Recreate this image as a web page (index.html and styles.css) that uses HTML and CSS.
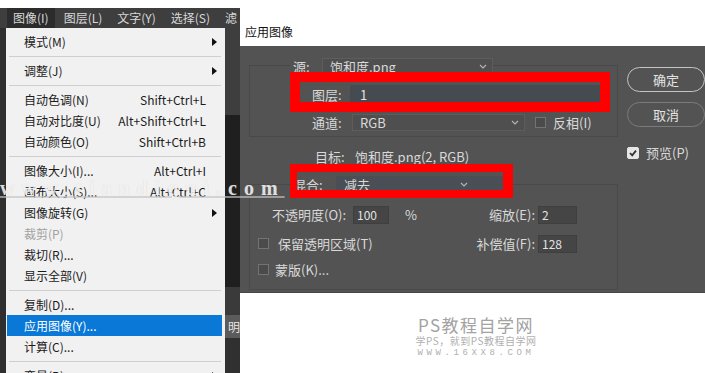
FILE: index.html
```html
<!doctype html>
<html>
   <head>
      <meta charset="utf-8">
      <title>应用图像</title>
      <link rel="stylesheet" href="styles.css">
   </head>
   <body>
      <div class="page">
         <!-- Photoshop image menu -->
         <section class="shot-left">
            <div class="menubar">
               <span class="mb-item active">图像(I)</span>
               <span class="mb-item">图层(L)</span>
               <span class="mb-item">文字(Y)</span>
               <span class="mb-item">选择(S)</span>
               <span class="mb-item">滤</span>
            </div>
            <div class="workspace">
               <div class="edge-left"></div>
               <ul class="menu">
                  <li class="item"><span>模式(M)</span><i class="sub"></i></li>
                  <li class="sep"></li>
                  <li class="item"><span>调整(J)</span><i class="sub"></i></li>
                  <li class="sep"></li>
                  <li class="item"><span>自动色调(N)</span><span class="key">Shift+Ctrl+L</span></li>
                  <li class="item"><span>自动对比度(U)</span><span class="key">Alt+Shift+Ctrl+L</span></li>
                  <li class="item"><span>自动颜色(O)</span><span class="key">Shift+Ctrl+B</span></li>
                  <li class="sep"></li>
                  <li class="item"><span>图像大小(I)...</span><span class="key">Alt+Ctrl+I</span></li>
                  <li class="item"><span>画布大小(S)...</span><span class="key">Alt+Ctrl+C</span></li>
                  <li class="item"><span>图像旋转(G)</span><i class="sub"></i></li>
                  <li class="item disabled"><span>裁剪(P)</span></li>
                  <li class="item"><span>裁切(R)...</span></li>
                  <li class="item"><span>显示全部(V)</span></li>
                  <li class="sep"></li>
                  <li class="item"><span>复制(D)...</span></li>
                  <li class="item active"><span>应用图像(Y)...</span></li>
                  <li class="item"><span>计算(C)...</span></li>
                  <li class="sep"></li>
                  <li class="item"><span>变量(B)</span><i class="sub"></i></li>
               </ul>
               <div class="edge-right">
                  <div class="er er-1"></div>
                  <div class="er er-2"></div>
                  <div class="er er-3"></div>
                  <div class="er er-4">明</div>
                  <div class="er er-5"></div>
               </div>
            </div>
         </section>

         <!-- Apply Image dialog -->
         <section class="dialog">
            <div class="titlebar">应用图像</div>
            <div class="dlg-body">
               <div class="dlg-main">
                  <div class="group group-src">
                     <div class="row row-src">
                        <span class="lbl lbl-src">源:</span>
                        <div class="select sel-src">
                           <span>饱和度.png</span>
                           <svg class="chev" width="8" height="5" viewBox="0 0 8 5"><polyline points="1,1 4,4 7,1" fill="none" stroke="#b4b4b4" stroke-width="1.2"/></svg>
                        </div>
                     </div>
                     <div class="row row-layer">
                        <span class="lbl lbl-layer">图层:</span>
                        <div class="field field-layer">1</div>
                     </div>
                     <div class="row row-chan">
                        <span class="lbl lbl-chan">通道:</span>
                        <div class="select sel-chan">
                           <span>RGB</span>
                           <svg class="chev" width="8" height="5" viewBox="0 0 8 5"><polyline points="1,1 4,4 7,1" fill="none" stroke="#b4b4b4" stroke-width="1.2"/></svg>
                        </div>
                        <span class="check check-inv"></span>
                        <span class="check-text">反相(I)</span>
                     </div>
                  </div>

                  <div class="row row-target">
                     <span class="lbl lbl-target">目标:</span>
                     <span class="value">饱和度.png(2, RGB)</span>
                  </div>

                  <div class="group group-blend">
                     <div class="row row-blend">
                        <span class="lbl lbl-blend">混合:</span>
                        <div class="select sel-blend">
                           <span>减去</span>
                           <svg class="chev" width="8" height="5" viewBox="0 0 8 5"><polyline points="1,1 4,4 7,1" fill="none" stroke="#b4b4b4" stroke-width="1.2"/></svg>
                        </div>
                     </div>
                     <div class="row row-op">
                        <span class="lbl lbl-op">不透明度(O):</span>
                        <div class="field field-num">100</div>
                        <span class="unit">%</span>
                        <div class="pair">
                           <span class="lbl">缩放(E):</span>
                           <div class="field field-num field-wide">2</div>
                        </div>
                     </div>
                     <div class="row row-pres">
                        <span class="check check-left"></span>
                        <span class="check-text pres-text">保留透明区域(T)</span>
                        <div class="pair">
                           <span class="lbl">补偿值(F):</span>
                           <div class="field field-num field-wide">128</div>
                        </div>
                     </div>
                     <div class="row row-mask">
                        <span class="check check-left"></span>
                        <span class="check-text mask-text">蒙版(K)...</span>
                     </div>
                  </div>
               </div>

               <div class="dlg-side">
                  <div class="btn btn-ok">确定</div>
                  <div class="btn btn-cancel">取消</div>
                  <div class="preview">
                     <span class="check checked">
                        <svg width="10" height="10" viewBox="0 0 10 10"><polyline points="2,5 4.2,7.3 8,2.6" fill="none" stroke="#333" stroke-width="1.8"/></svg>
                     </span>
                     <span class="check-text">预览(P)</span>
                  </div>
               </div>

               <div class="redbox redbox-1"></div>
               <div class="redbox redbox-2"></div>
            </div>
            <div class="watermark">
               <div class="wm-title">PS教程自学网</div>
               <div class="wm-sub">学PS，就到PS教程自学网</div>
               <div class="wm-url">WWW.16XX8.COM</div>
            </div>
         </section>

         <div class="site-mark">www.tiandiqui.com</div>
      </div>
   </body>
</html>
```

FILE: styles.css
```css
/* General Reset */
* {
   margin: 0;
   padding: 0;
   box-sizing: border-box;
}

body {
   font-family: "Noto Sans CJK SC", "Noto Sans", sans-serif;
   background: #ffffff;
   color: #1b1b1b;
   width: 705px;
   height: 373px;
   overflow: hidden;
}

.page {
   position: relative;
   display: flex;
   width: 705px;
   height: 373px;
   overflow: hidden;
}

/* Left screenshot: menu */
.shot-left {
   width: 240px;
   padding-top: 8px;
   display: flex;
   flex-direction: column;
   overflow: hidden;
}

.menubar {
   flex-shrink: 0;
   height: 20px;
   background: #3e3e3e;
   display: flex;
   padding-left: 7px;
   overflow: hidden;
   white-space: nowrap;
}

.mb-item {
   flex-shrink: 0;
   font-size: 12px;
   line-height: 20px;
   color: #d8d8d8;
   padding: 0 6px;
   margin-right: 3px;
}

.mb-item.active {
   background: #2c2c2c;
}

.workspace {
   flex: 1;
   min-height: 0;
   display: flex;
   overflow: hidden;
}

.edge-left {
   width: 6px;
   background: #2f2f2f;
}

.menu {
   width: 220px;
   background: #f1f1f1;
   list-style: none;
   padding: 3px 3px 3px 1px;
   overflow: hidden;
}

.item {
   height: 21px;
   display: flex;
   align-items: center;
   padding: 0 5px 0 17px;
   font-size: 12px;
   color: #1b1b1b;
   white-space: nowrap;
}

.item .key {
   margin-left: auto;
   margin-right: 11px;
}

.item .sub {
   margin-left: auto;
   width: 0;
   height: 0;
   border-top: 4px solid transparent;
   border-bottom: 4px solid transparent;
   border-left: 5px solid #111111;
}

.item.disabled {
   color: #a2a2a2;
}

.item.active {
   background: #0a78d7;
   color: #ffffff;
}

.sep {
   height: 8px;
   display: flex;
   align-items: center;
   margin: 0 1px 0 2px;
}

.sep::after {
   content: "";
   flex: 1;
   height: 1px;
   background: #cfcfcf;
}

.edge-right {
   flex: 1;
   display: flex;
   flex-direction: column;
}

.er-1 { height: 87px; background: #3e3e3e; }
.er-2 { height: 172px; background: #1f1f1f; }
.er-3 { height: 28px; background: #3a3a3a; }
.er-4 {
   height: 23px;
   background: #5b5b5b;
   color: #e6e6e6;
   font-size: 12px;
   line-height: 23px;
   padding-left: 3px;
   overflow: hidden;
}
.er-5 { flex: 1; background: #303030; }

/* Dialog */
.dialog {
   width: 465px;
   display: flex;
   flex-direction: column;
   overflow: hidden;
}

.titlebar {
   flex-shrink: 0;
   height: 46px;
   padding: 24px 0 0 5px;
   font-size: 12px;
   line-height: 16px;
   color: #111111;
}

.dlg-body {
   flex-shrink: 0;
   position: relative;
   height: 247px;
   background: #535353;
   display: flex;
   color: #d9d9d9;
   font-size: 13px;
   border-bottom: 1px solid #474747;
}

.dlg-main {
   width: 390px;
   display: flex;
   flex-direction: column;
}

/* group boxes: the top rule runs through the first row, like a legend */
.group {
   margin-left: 9px;
   width: 369px;
   border: 1px solid #494949;
}

.group-src {
   margin-top: 19px;
   padding-bottom: 5px;
}

.group-blend {
   margin-top: 19px;
   padding-bottom: 11px;
}

.row {
   display: flex;
   align-items: center;
   white-space: nowrap;
}

.lbl {
   line-height: 16px;
}

.row-src { height: 17px; margin-top: -8px; }
.row-layer { height: 21px; margin-top: 9px; }
.row-chan { height: 17px; margin-top: 9px; }
.row-target { height: 16px; margin-top: 12px; }
.row-blend { height: 17px; margin-top: -9px; }
.row-op { height: 19px; margin-top: 12px; }
.row-pres { height: 19px; margin-top: 10px; }
.row-mask { height: 17px; margin-top: 8px; }

.lbl-src {
   margin-left: 40px;
   width: 32px;
   padding-left: 3px;
   background: #535353;
}
.lbl-layer { margin-left: 62px; width: 38px; }
.lbl-chan { margin-left: 62px; width: 40px; }
.lbl-target { margin-left: 75px; width: 40px; }
.lbl-blend {
   margin-left: 40px;
   width: 46px;
   padding-left: 3px;
   background: #535353;
}
.lbl-op { margin-left: 22px; width: 81px; }

.value {
   line-height: 16px;
}

.select {
   height: 17px;
   display: flex;
   align-items: center;
   justify-content: space-between;
   padding: 0 5px 0 7px;
   background: #4f4f4f;
   border: 1px solid #5d5d5d;
   font-size: 13px;
   line-height: 15px;
}

.sel-src { width: 171px; }
.sel-chan { width: 173px; }
.sel-blend {
   width: 169px;
   background: #4a4e55;
   border-color: #4a4e55;
   padding-right: 36px;
}

.field {
   height: 19px;
   background: #464a51;
   padding-left: 10px;
   font-size: 13px;
   line-height: 19px;
   color: #e2e2e2;
}

.field-layer { width: 254px; }

.field-num {
   width: 36px;
   height: 18px;
   padding-left: 3px;
   line-height: 16px;
   background: #454545;
   border: 1px solid #3f3f3f;
   font-size: 12px;
}

.field-wide { width: 39px; }

.unit {
   margin-left: 16px;
}

.pair {
   margin-left: auto;
   margin-right: 40px;
   display: flex;
   align-items: center;
   gap: 3px;
}

.check {
   width: 11px;
   height: 11px;
   background: #4b4b4b;
   border: 1px solid #737373;
   display: inline-flex;
   align-items: center;
   justify-content: center;
}

.check-inv { margin-left: 10px; }
.check-text { margin-left: 7px; line-height: 16px; }
.check-left { margin-left: 8px; }
.pres-text { margin-left: 9px; }
.mask-text { margin-left: 6px; }

/* Right-hand buttons */
.dlg-side {
   flex: 1;
   padding: 21px 0 0 8px;
   display: flex;
   flex-direction: column;
}

.btn {
   width: 78px;
   height: 25px;
   flex-shrink: 0;
   border-radius: 13px;
   border: 1px solid #9a9a9a;
   text-align: center;
   font-size: 13px;
   line-height: 23px;
   color: #e4e4e4;
}

.btn-ok { border-color: #c4c4c4; }
.btn-cancel { margin-top: 10px; border-color: #7b7b7b; }

.preview {
   margin-top: 20px;
   display: flex;
   align-items: center;
   height: 12px;
}

.check.checked {
   width: 12px;
   height: 12px;
   background: #e6e6e6;
   border-color: #e6e6e6;
   border-radius: 2px;
}

/* Red annotation frames */
.redbox {
   position: absolute;
   border: 10px solid #ff0000;
}

.redbox-1 {
   left: 50px;
   top: 26px;
   width: 320px;
   height: 40px;
}

.redbox-2 {
   left: 50px;
   top: 118px;
   width: 223px;
   height: 34px;
   border-width: 8px 10px 8px 7px;
}

/* Watermark under dialog */
.watermark {
   flex: 1;
   padding: 22px 0 0 7px;
   text-align: center;
   color: #a3a3a3;
}

.wm-title {
   font-size: 17px;
   line-height: 20px;
   letter-spacing: 1.5px;
}

.wm-sub {
   font-size: 10px;
   line-height: 12px;
   letter-spacing: 0.5px;
   color: #b0b0b0;
}

.wm-url {
   font-family: "Liberation Mono", monospace;
   font-size: 9px;
   line-height: 12px;
   letter-spacing: 3.6px;
   color: #b0b0b0;
}

/* Site watermark laid over the whole shot */
.site-mark {
   position: absolute;
   left: 0;
   top: 177px;
   font-family: "Liberation Serif", serif;
   font-weight: bold;
   font-size: 20px;
   line-height: 22px;
   letter-spacing: 7px;
   color: rgba(246, 246, 246, 0.85);
   text-shadow: 0 0 1px rgba(150, 150, 150, 0.3);
   text-decoration: underline;
   text-decoration-color: rgba(210, 210, 210, 0.5);
   white-space: nowrap;
}
```
